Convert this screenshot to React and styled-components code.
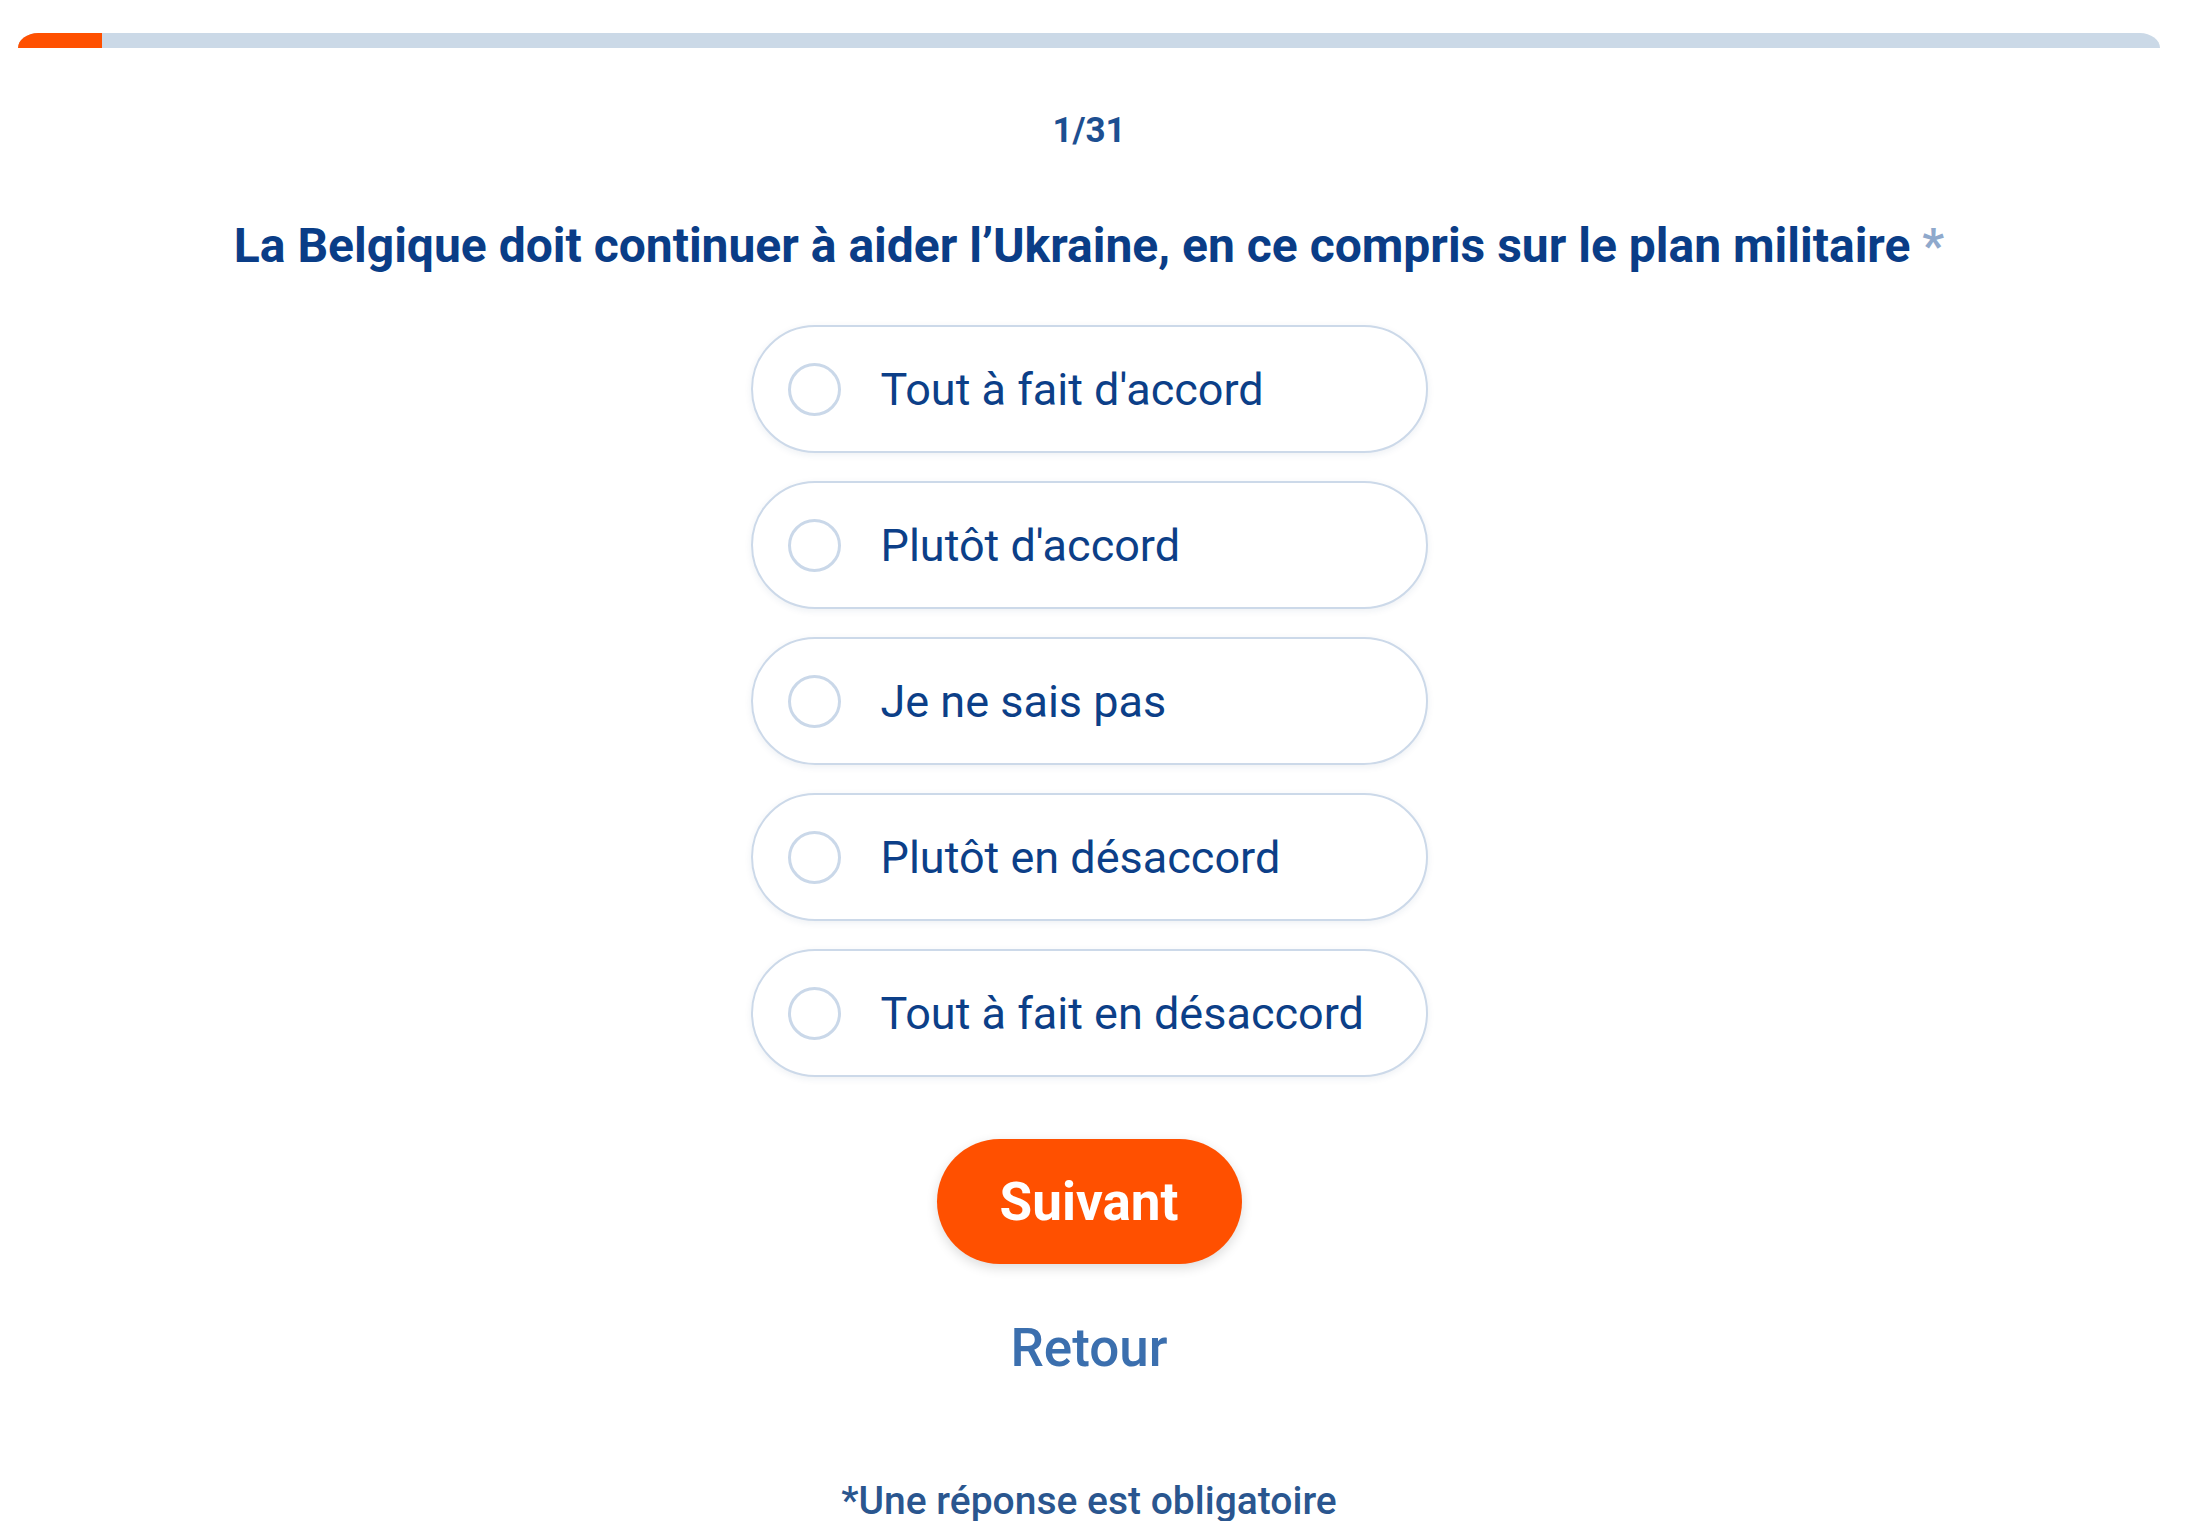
import React, { useState } from 'react';
import styled, { createGlobalStyle } from 'styled-components';

const GlobalStyle = createGlobalStyle`
  body {
    margin: 0;
    background: #ffffff;
    font-family: Roboto, "Noto Sans", Arial, sans-serif;
  }
`;

const Page = styled.div`
  padding: 33px 40px 0 18px;
  display: flex;
  flex-direction: column;
`;

const ProgressTrack = styled.div`
  height: 15px;
  background: #cbd9e7;
  border-radius: 20px 20px 0 0 / 15px 15px 0 0;
  overflow: hidden;
  display: flex;
`;

const ProgressFill = styled.div`
  height: 100%;
  background: #ff5000;
`;

const Content = styled.div`
  display: flex;
  flex-direction: column;
  align-items: center;
`;

const Counter = styled.div`
  margin-top: 65px;
  font-size: 35px;
  line-height: 1;
  font-weight: 700;
  color: #1d4f91;
`;

const Question = styled.h1`
  margin: 74px 0 0;
  font-size: 48px;
  line-height: 1;
  font-weight: 700;
  color: #0a3d87;
  white-space: nowrap;
`;

const Required = styled.span`
  color: #8fa9cc;
`;

const OptionList = styled.div`
  margin-top: 55px;
  display: flex;
  flex-direction: column;
  gap: 28px;
`;

const Option = styled.label`
  box-sizing: border-box;
  width: 677px;
  height: 128px;
  display: flex;
  align-items: center;
  gap: 40px;
  padding-left: 35px;
  border: 2px solid ${props => (props.checked ? '#ff5000' : '#ccd9e9')};
  border-radius: 64px;
  background: #ffffff;
  box-shadow: 0 2px 7px rgba(30, 60, 110, 0.08);
  cursor: pointer;
`;

const Radio = styled.span`
  box-sizing: border-box;
  width: 53px;
  height: 53px;
  flex-shrink: 0;
  border-radius: 50%;
  border: 3px solid #cad8e9;
  background: ${props => (props.checked ? '#ff5000' : '#ffffff')};
`;

const OptionText = styled.span`
  font-size: 45px;
  line-height: 1;
  font-weight: 400;
  color: #0c3f88;
`;

const NextButton = styled.button`
  margin-top: 62px;
  width: 305px;
  height: 125px;
  border: none;
  border-radius: 63px;
  background: #ff5000;
  color: #ffffff;
  font-family: Roboto, Arial, sans-serif;
  font-size: 53px;
  font-weight: 700;
  box-shadow: 0 4px 12px rgba(0, 0, 0, 0.14);
  cursor: pointer;
`;

const BackLink = styled.button`
  margin-top: 58px;
  padding: 0;
  border: none;
  background: none;
  font-family: Roboto, Arial, sans-serif;
  font-size: 53px;
  line-height: 1;
  font-weight: 500;
  color: #3b6fae;
  cursor: pointer;
`;

const Footnote = styled.p`
  margin: 107px 0 0;
  font-size: 39px;
  line-height: 1;
  font-weight: 500;
  color: #2a568f;
`;

const options = [
  "Tout à fait d'accord",
  "Plutôt d'accord",
  'Je ne sais pas',
  'Plutôt en désaccord',
  'Tout à fait en désaccord',
];

const App = () => {
  const [selected, setSelected] = useState(null);

  return (
    <Page>
      <GlobalStyle />
      <ProgressTrack>
        <ProgressFill style={{ width: `${(84 / 2142) * 100}%` }} />
      </ProgressTrack>
      <Content>
        <Counter>1/31</Counter>
        <Question>
          La Belgique doit continuer à aider l’Ukraine, en ce compris sur le plan militaire <Required>*</Required>
        </Question>
        <OptionList>
          {options.map((label, i) => (
            <Option key={label} checked={selected === i} onClick={() => setSelected(i)}>
              <Radio checked={selected === i} />
              <OptionText>{label}</OptionText>
            </Option>
          ))}
        </OptionList>
        <NextButton>Suivant</NextButton>
        <BackLink>Retour</BackLink>
        <Footnote>*Une réponse est obligatoire</Footnote>
      </Content>
    </Page>
  );
};

export default App;
